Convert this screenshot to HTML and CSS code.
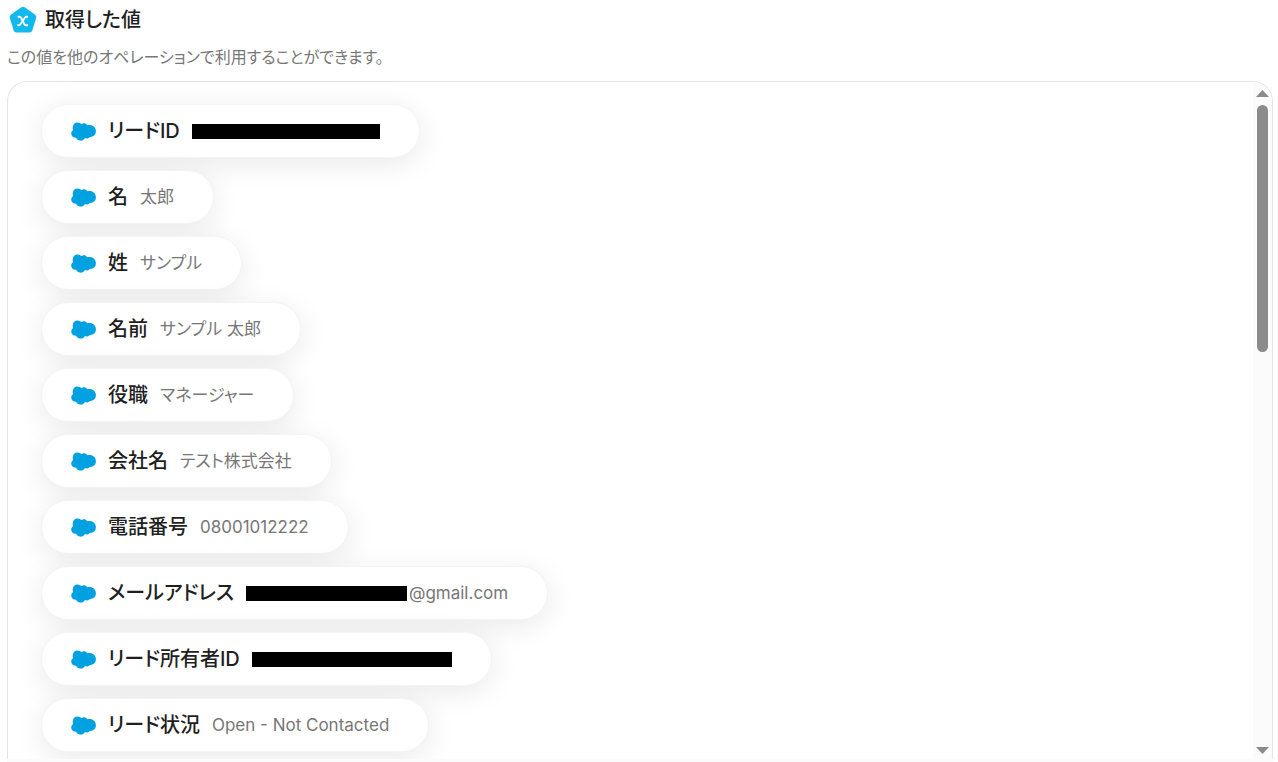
FILE: index.html
```html
<!DOCTYPE html>
<html lang="ja">
<head>
<meta charset="utf-8">
<title>取得した値</title>
<link rel="stylesheet" href="styles.css">
</head>
<body>
<svg class="defs" aria-hidden="true">
  <symbol id="cloud" viewBox="0 0 25 19">
    <path fill="#00a1e0" d="M1.700 5.500C2 2.200 4 .4 6.700.5q2.300.1 3.700 1.500C12 .7 15 .8 16.300 3.300 20.500 2 25 4.500 24.900 9.300c0 4-3.200 6-6.200 5.600-1.200 1.500-3 1.900-4.600 1.200-1.200 1.900-3 2.700-5 2.500-1.900-.2-3.400-1.300-4-2.800C2 15.800.1 14 .2 11.300c0-1.300.8-2.600 1.900-3.400q-.6-1.200-.4-2.400z"/>
  </symbol>
</svg>
<main class="page">
  <header class="head">
    <svg class="badge" viewBox="0 0 28 28" aria-hidden="true">
      <path d="M12.3 1.3Q14 .1 15.7 1.3L26.2 8.8Q27.8 10 27.2 12L23.3 24.5Q22.6 26.6 20.4 26.6H7.6Q5.400 26.600 4.700 24.500L.8 12Q.2 10 1.800 8.800z" fill="#12b9ec"/>
      <path d="M9.500 10.700h1q1.100 0 1.600 1.100l3.200 6.400q.5 1.100 1.600 1.100h1.300M18.200 10.700h-.7q-.9 0-1.500.8l-4.800 7q-.6.8-1.500.8h-.7" fill="none" stroke="#fff" stroke-width="1.900" stroke-linecap="round"/>
    </svg>
    <h1 class="title">取得した値</h1>
  </header>
  <p class="lead">この値を他のオペレーションで利用することができます。</p>
  <section class="panel">
    <ul class="list">
      <li class="pill"><svg class="icon"><use href="#cloud"/></svg><span class="name">リードID</span><span class="value"><span class="mask mask-lead"></span></span></li>
      <li class="pill"><svg class="icon"><use href="#cloud"/></svg><span class="name">名</span><span class="value">太郎</span></li>
      <li class="pill"><svg class="icon"><use href="#cloud"/></svg><span class="name">姓</span><span class="value">サンプル</span></li>
      <li class="pill"><svg class="icon"><use href="#cloud"/></svg><span class="name">名前</span><span class="value">サンプル 太郎</span></li>
      <li class="pill"><svg class="icon"><use href="#cloud"/></svg><span class="name">役職</span><span class="value">マネージャー</span></li>
      <li class="pill"><svg class="icon"><use href="#cloud"/></svg><span class="name">会社名</span><span class="value">テスト株式会社</span></li>
      <li class="pill"><svg class="icon"><use href="#cloud"/></svg><span class="name">電話番号</span><span class="value">08001012222</span></li>
      <li class="pill"><svg class="icon"><use href="#cloud"/></svg><span class="name">メールアドレス</span><span class="value"><span class="mask mask-mail"></span>@gmail.com</span></li>
      <li class="pill"><svg class="icon"><use href="#cloud"/></svg><span class="name">リード所有者ID</span><span class="value"><span class="mask mask-owner"></span></span></li>
      <li class="pill"><svg class="icon"><use href="#cloud"/></svg><span class="name">リード状況</span><span class="value">Open - Not Contacted</span></li>
    </ul>
    <div class="scrollbar" aria-hidden="true">
      <svg class="arrow" viewBox="0 0 13 7"><path d="M0 7 6.500 0 13 7z"/></svg>
      <div class="track"><div class="thumb"></div></div>
      <svg class="arrow" viewBox="0 0 13 7"><path d="M0 0 6.500 7 13 0z"/></svg>
    </div>
  </section>
</main>
</body>
</html>
```
FILE: styles.css
```css
* { box-sizing: border-box; }

body {
  margin: 0;
  background: #fff;
  color: #1f1f1f;
  font-family: Inter, "Noto Sans CJK JP", sans-serif;
  font-feature-settings: "palt";
}

.defs { display: none; }

.page {
  display: flex;
  flex-direction: column;
  height: 100vh;
  padding: 6px 5px 0 7px;
  overflow: hidden;
}

.head {
  display: flex;
  align-items: center;
  gap: 8px;
  padding-left: 2px;
  height: 28px;
}

.badge { width: 28px; height: 28px; }

.title {
  margin: 0;
  font-size: 20px;
  font-weight: 500;
  line-height: 28px;
}

.lead {
  margin: 12px 0;
  color: #777;
  font-size: 16px;
  line-height: 23px;
}

.panel {
  display: flex;
  flex: 1;
  min-height: 0;
  border: 1px solid #e4e4e4;
  border-bottom: 0;
  border-radius: 20px 20px 0 0;
  margin-bottom: 3px;
  overflow: hidden;
  box-shadow: 0 3px 0 #fbfbfb;
}

.list {
  display: flex;
  flex: 1;
  flex-direction: column;
  align-items: flex-start;
  gap: 12px;
  margin: 0;
  padding: 22px 33px 0;
  list-style: none;
}

.pill {
  display: flex;
  flex: none;
  align-items: center;
  height: 54px;
  padding: 0 39px 0 29px;
  border: 1px solid #f4f4f4;
  border-radius: 27px;
  background: #fff;
  box-shadow: 0 6px 30px rgba(0, 0, 0, 0.09);
  white-space: nowrap;
}

.icon { width: 25px; height: 19px; margin-right: 12px; }

.name {
  margin-right: 12px;
  font-size: 20px;
  font-weight: 500;
  line-height: 28px;
}

.value {
  display: flex;
  align-items: center;
  color: #777;
  font-size: 17px;
  line-height: 26px;
}

.mask { height: 15px; background: #000; }
.mask-lead { width: 188px; }
.mask-mail { width: 161px; margin-right: 2px; }
.mask-owner { width: 200px; }

.scrollbar {
  display: flex;
  flex-direction: column;
  align-items: center;
  width: 19px;
  padding: 8px 0 5px;
  background: #fbfbfb;
}

.arrow { width: 13px; height: 7px; fill: #8b8b8b; }

.track { flex: 1; padding: 8px 0; }

.thumb {
  width: 11px;
  height: 39%;
  border-radius: 6px;
  background: #8b8b8b;
}
```
